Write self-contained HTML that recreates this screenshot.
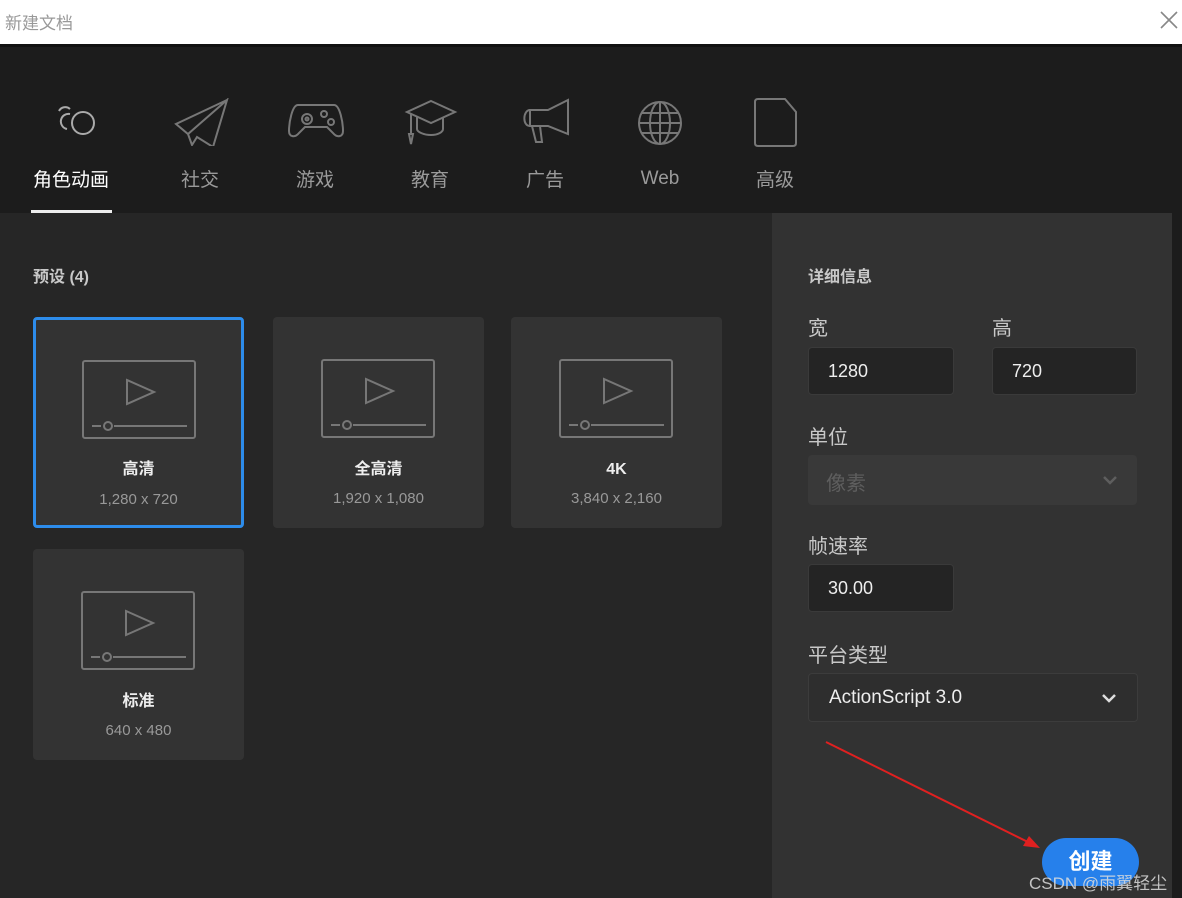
<!DOCTYPE html>
<html><head><meta charset="utf-8"><style>
*{margin:0;padding:0;box-sizing:border-box}
body{width:1182px;height:898px;background:#1c1c1c;position:relative;overflow:hidden;font-family:"Liberation Sans","Noto Sans CJK SC",sans-serif}
.a{position:absolute}
.title{left:0;top:0;width:1182px;height:47px;background:#fff;border-bottom:3px solid #111}
.tab{top:168px;width:90px;text-align:center;font-size:19px;color:#9a9a9a;line-height:26px;height:26px}
.ico{top:96px}
.left{left:0;top:213px;width:772px;height:685px;background:#262626}
.right{left:772px;top:213px;width:400px;height:685px;background:#323232}
.card{width:211px;height:211px;background:#333;border-radius:4px}
.card .n{position:absolute;top:141px;width:100%;text-align:center;color:#eee;font-size:16px;font-weight:bold;line-height:24px}
.card .s{position:absolute;top:172px;width:100%;text-align:center;color:#999;font-size:15px;line-height:20px}
.card svg{position:absolute;left:48px;top:42px}
.lbl{color:#c8c8c8;font-size:20px;line-height:26px}
.inp{background:#242424;border:1px solid #3a3a3a;border-radius:4px;color:#eee;font-size:18px;padding-left:19px;line-height:46px;height:48px}
</style></head><body>
<div class="a title"><span class="a" style="left:5px;top:9px;font-size:17px;color:#999">新建文档</span>
<svg class="a" style="left:1160px;top:11px" width="18" height="18"><path d="M1 1L17 17M17 1L1 17" stroke="#888" stroke-width="1.6"/></svg></div>

<svg class="a ico" style="left:45px;top:98px" width="55" height="45" fill="none" stroke="#aaa" stroke-width="2"><circle cx="38" cy="25" r="11"/><path d="M25 16a7 7 0 1 0-3 15M14 13a7 7 0 0 1 11 -2"/></svg>
<svg class="a ico" style="left:172px;top:98px" width="60" height="48" fill="none" stroke="#777" stroke-width="2"><path d="M55 2L4 26l12 10zM55 2L16 36l4 11 5-8 16 10z"/></svg>
<svg class="a ico" style="left:288px;top:100px" width="56" height="40" fill="none" stroke="#777" stroke-width="2"><path d="M10 5h36c6 0 9 18 9 26 0 6-6 7-10 2l-6-6H17l-6 6c-4 5-10 4-10-2C1 23 4 5 10 5z"/><circle cx="19" cy="19" r="5"/><circle cx="19" cy="19" r="1.5"/><circle cx="36" cy="14" r="3"/><circle cx="43" cy="22" r="3"/></svg>
<svg class="a ico" style="left:403px;top:98px" width="56" height="50" fill="none" stroke="#777" stroke-width="2"><path d="M28 3L52 14 28 25 4 14zM14 19v12c0 3 7 6 14 6s12-3 12-6V19M8 16v20M6 36h4l-2 10z"/></svg>
<svg class="a ico" style="left:518px;top:98px" width="56" height="48" fill="none" stroke="#777" stroke-width="2"><path d="M50 2v34L30 28H12V12h18zM12 12C5 12 4 28 12 28M14 28l4 16h6l-2-16"/></svg>
<svg class="a ico" style="left:636px;top:100px" width="48" height="46" fill="none" stroke="#777" stroke-width="2"><circle cx="24" cy="23" r="21"/><ellipse cx="24" cy="23" rx="10" ry="21"/><path d="M24 2v42M3 23h42M6 13h36M6 33h36"/></svg>
<svg class="a ico" style="left:753px;top:97px" width="46" height="52" fill="none" stroke="#777" stroke-width="2"><path d="M5 2h27l11 13v31c0 2-1 3-3 3H5c-2 0-3-1-3-3V5c0-2 1-3 3-3z"/></svg>

<div class="a tab" style="left:26px;color:#fff">角色动画</div>
<div class="a" style="left:31px;top:210px;width:81px;height:3px;background:#eee"></div>
<div class="a tab" style="left:155px">社交</div>
<div class="a tab" style="left:270px">游戏</div>
<div class="a tab" style="left:385px">教育</div>
<div class="a tab" style="left:500px">广告</div>
<div class="a tab" style="left:615px;top:166px">Web</div>
<div class="a tab" style="left:730px">高级</div>

<div class="a left"></div>
<div class="a right"></div>
<div class="a" style="left:33px;top:263px;color:#c8c8c8;font-size:16px;font-weight:bold">预设 (4)</div>

<div class="a card" style="left:33px;top:317px;border:3px solid #2d8ceb">
<svg style="left:46px;top:40px" width="115" height="80" fill="none" stroke="#777" stroke-width="2"><rect x="1" y="1" width="112" height="77" rx="2"/><path d="M45 20v24l27-12z"/><path d="M10 66h9M32 66h73"/><circle cx="26" cy="66" r="4"/></svg>
<div class="n" style="top:138px">高清</div><div class="s" style="top:170px">1,280 x 720</div></div>
<div class="a card" style="left:273px;top:317px">
<svg width="115" height="80" fill="none" stroke="#777" stroke-width="2"><rect x="1" y="1" width="112" height="77" rx="2"/><path d="M45 20v24l27-12z"/><path d="M10 66h9M32 66h73"/><circle cx="26" cy="66" r="4"/></svg>
<div class="n">全高清</div><div class="s">1,920 x 1,080</div></div>
<div class="a card" style="left:511px;top:317px">
<svg width="115" height="80" fill="none" stroke="#777" stroke-width="2"><rect x="1" y="1" width="112" height="77" rx="2"/><path d="M45 20v24l27-12z"/><path d="M10 66h9M32 66h73"/><circle cx="26" cy="66" r="4"/></svg>
<div class="n">4K</div><div class="s">3,840 x 2,160</div></div>
<div class="a card" style="left:33px;top:549px">
<svg width="115" height="80" fill="none" stroke="#777" stroke-width="2"><rect x="1" y="1" width="112" height="77" rx="2"/><path d="M45 20v24l27-12z"/><path d="M10 66h9M32 66h73"/><circle cx="26" cy="66" r="4"/></svg>
<div class="n">标准</div><div class="s">640 x 480</div></div>

<div class="a" style="left:808px;top:263px;color:#c8c8c8;font-size:16px;font-weight:bold">详细信息</div>
<div class="a lbl" style="left:808px;top:316px">宽</div>
<div class="a lbl" style="left:992px;top:316px">高</div>
<div class="a inp" style="left:808px;top:347px;width:146px">1280</div>
<div class="a inp" style="left:992px;top:347px;width:145px">720</div>
<div class="a lbl" style="left:808px;top:425px">单位</div>
<div class="a" style="left:808px;top:455px;width:329px;height:50px;background:#393939;border-radius:4px;color:#5e5e5e;font-size:20px;padding:12px 0 0 18px">像素
<svg class="a" style="left:294px;top:20px" width="16" height="10" fill="none" stroke="#5e5e5e" stroke-width="2.5"><path d="M2 2l6 6 6-6"/></svg></div>
<div class="a lbl" style="left:808px;top:534px">帧速率</div>
<div class="a inp" style="left:808px;top:564px;width:146px">30.00</div>
<div class="a lbl" style="left:808px;top:643px">平台类型</div>
<div class="a" style="left:808px;top:673px;width:330px;height:49px;background:#2e2e2e;border:1px solid #3c3c3c;border-radius:4px;color:#eee;font-size:19px;padding:13px 0 0 20px">ActionScript 3.0
<svg class="a" style="left:292px;top:19px" width="16" height="10" fill="none" stroke="#ddd" stroke-width="2.5"><path d="M2 2l6 6 6-6"/></svg></div>

<svg class="a" style="left:820px;top:735px" width="230" height="120"><path d="M6 7L216 111" stroke="#e02020" stroke-width="2"/><path d="M220 113l-17-2 6-10z" fill="#e02020"/></svg>
<div class="a" style="left:1042px;top:838px;width:97px;height:48px;background:#2680eb;border-radius:24px;color:#fff;font-size:22px;font-weight:bold;text-align:center;line-height:48px">创建</div>
<div class="a" style="left:1029px;top:869px;color:#ddd;font-size:17px;opacity:.85">CSDN @雨翼轻尘</div>
</body></html>
